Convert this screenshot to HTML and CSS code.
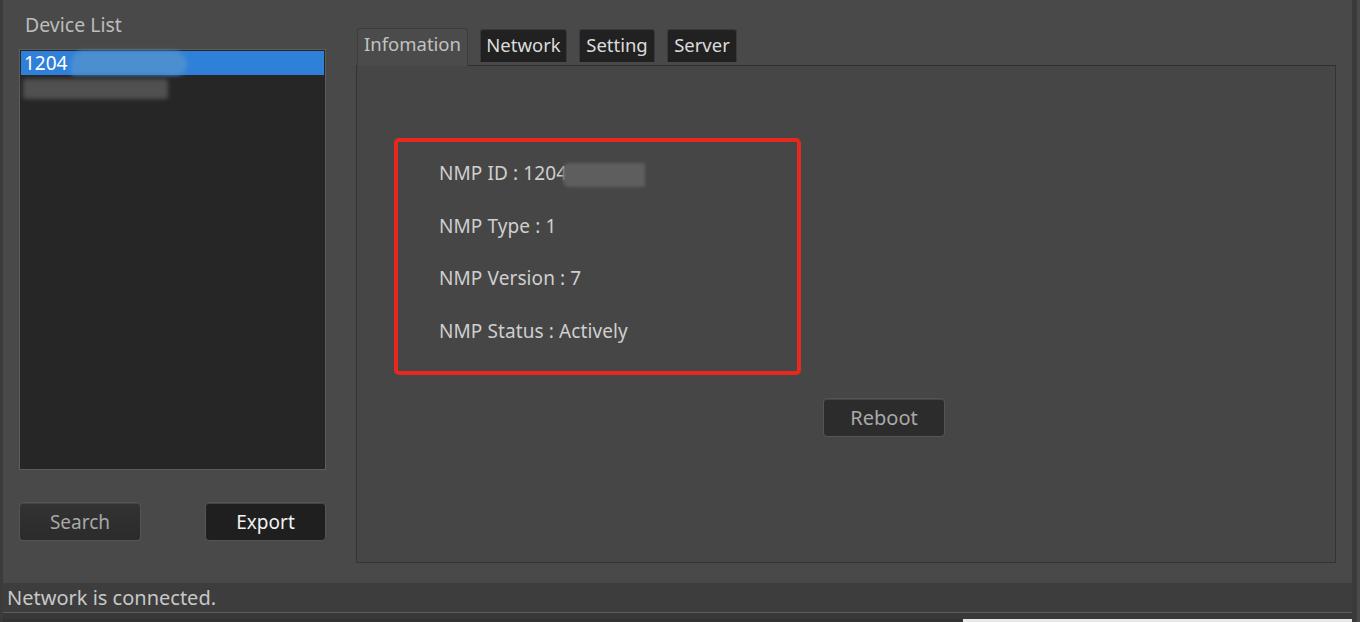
FILE: index.html
```html
<!DOCTYPE html>
<html>
<head>
<meta charset="utf-8">
<link rel="stylesheet" href="styles.css">
</head>
<body>
<div class="window">
  <div class="main">
    <div class="sidebar">
      <div class="title">Device List</div>
      <div class="list">
        <div class="row selected"><span>1204</span><div class="blob blue"></div></div>
        <div class="row"><div class="blob gray"></div></div>
      </div>
      <div class="btns">
        <button class="btn search">Search</button>
        <button class="btn export">Export</button>
      </div>
    </div>
    <div class="content">
      <div class="tabs">
        <div class="tab active">Infomation</div>
        <div class="tab">Network</div>
        <div class="tab">Setting</div>
        <div class="tab">Server</div>
      </div>
      <div class="pane">
        <div class="info">
          <div class="line">NMP ID : 1204<span class="mask"></span></div>
          <div class="line">NMP Type : 1</div>
          <div class="line">NMP Version : 7</div>
          <div class="line">NMP Status : Actively</div>
        </div>
        <div class="reboot-row"><button class="btn reboot">Reboot</button></div>
      </div>
    </div>
  </div>
  <div class="status">Network is connected.</div>
  <div class="bottom"><div class="bottom-dark"></div><div class="bottom-light"><div class="bl-dark"></div><div class="bl-white"></div></div></div>
</div>
</body>
</html>
```
FILE: styles.css
```css
* { box-sizing: border-box; }
html, body { margin: 0; padding: 0; background: #4a4a4a; }
body { width: 1360px; height: 622px; overflow: hidden; font-family: "Noto Sans", "Open Sans", sans-serif; }
.window {
  height: 622px;
  display: flex;
  flex-direction: column;
  background: #494949;
  border-left: 3px solid #3b3b3b;
  width: 1357px;
  border-right: 5px solid #3a3a3a;
}
.main { display: flex; flex: 1; min-height: 0; }
.sidebar { width: 353px; padding: 12px 0 0 16px; display: flex; flex-direction: column; }
.title { color: #bcbcbc; font-size: 19.5px; padding-left: 6px; height: 37px; line-height: 26px; }
.list {
  width: 307px; height: 421px;
  background: #262626;
  border: 1px solid #5c5c5c;
  padding: 1px;
}
.row { position: relative; height: 24px; line-height: 24px; color: #fff; font-size: 19px; padding-left: 3px; }
.row.selected { background: #2f80d9; }
.blob { position: absolute; filter: blur(2px); }
.blob.blue { left: 50px; top: 0; width: 116px; height: 24px; background: #4b8fd0; border-radius: 12px 14px 10px 4px; }
.blob.gray { left: 2px; top: 4px; width: 145px; height: 20px; background: #505050; border-radius: 3px; }
.btns { display: flex; justify-content: space-between; width: 307px; margin-top: 32px; }
.btn {
  font-family: inherit;
  width: 122px; height: 39px;
  border-radius: 4px;
  border: 1px solid #555;
  background: linear-gradient(#333, #2b2b2b);
  color: #a8a8a8;
  font-size: 19px;
  box-shadow: inset 0 1px 0 #444;
  padding: 0;
}
.btn.export { background: #1f1f1f; color: #f2f2f2; width: 121px; }
.content { flex: 1; padding: 28px 16px 20px 0; display: flex; flex-direction: column; }
.tabs { display: flex; gap: 12px; align-items: flex-start; padding-left: 1px; height: 37px; }
.tab {
  height: 33px; line-height: 30px; margin-top: 1px;
  padding: 0;
  text-align: center;
  background: #212121;
  color: #dcdcdc;
  font-size: 18.5px;
  border: 1px solid #3a3a3a;
  border-bottom: none;
  border-radius: 3px 3px 0 0;
}
.tab.active {
  width: 111px;
  height: 38px; margin-top: 0; line-height: 30px;
  background: #4b4b4b; color: #c2c2c2;
  border-color: #3d3d3d;
  position: relative; z-index: 1;
  margin-bottom: -1px;
}
.tab:nth-child(2) { width: 87px; }
.tab:nth-child(3) { width: 76px; }
.tab:nth-child(4) { width: 70px; }
.pane {
  flex: 1;
  background: #464646;
  border: 1px solid #333;
  border-top-color: #2f2f2f;
  padding: 72px 0 0 37px;
}
.info {
  width: 407px; height: 237px;
  border: 4px solid #e8281c;
  border-radius: 5px;
  padding: 19px 0 0 41px;
}
.line { color: #cfcfcf; font-size: 19px; letter-spacing: 0.1px; height: 52.7px; line-height: 24px; position: relative; }
.mask { display: inline-block; vertical-align: middle; width: 82px; height: 24px; background: #5e5e5e; filter: blur(1.5px); margin-left: -4px; border-radius: 6px 0 0 6px; }
.reboot-row { padding: 23px 0 0 429px; }
.btn.reboot { width: 122px; height: 39px; background: #2c2c2c; color: #a9a9a9; font-size: 20px; }
.status {
  height: 29px; background: #3d3d3d; color: #c8c8c8;
  font-size: 20px; line-height: 29px; padding-left: 4px;
}
.bottom { height: 10px; display: flex; flex-direction: column; }
.bottom-dark { height: 7px; background: #383838; border-top: 1px solid #5e5e5e; }
.bottom-light { flex: 1; display: flex; }
.bl-dark { width: 960px; background: #333; }
.bl-white { flex: 1; background: #e8e8e8; }
```
